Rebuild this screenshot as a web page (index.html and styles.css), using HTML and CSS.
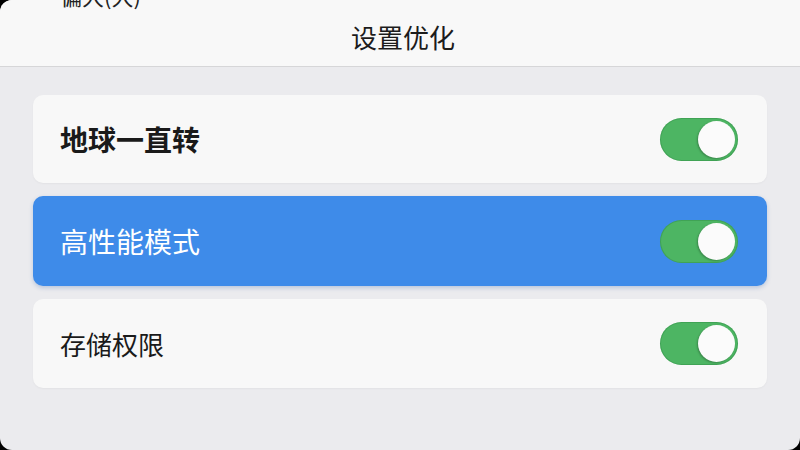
FILE: index.html
```html
<!DOCTYPE html>
<html lang="zh">
<head>
<meta charset="utf-8">
<link rel="stylesheet" href="styles.css">
</head>
<body>
<div class="sheet">
  <span class="behind">偏大(大)</span>
  <header class="head">设置优化</header>
  <main class="list">
    <div class="card">
      <span class="label bold">地球一直转</span>
      <span class="toggle"><span class="knob"></span></span>
    </div>
    <div class="card active">
      <span class="label">高性能模式</span>
      <span class="toggle"><span class="knob"></span></span>
    </div>
    <div class="card last">
      <span class="label small">存储权限</span>
      <span class="toggle"><span class="knob"></span></span>
    </div>
  </main>
</div>
</body>
</html>
```
FILE: styles.css
```css
html, body {
  margin: 0;
  padding: 0;
  width: 800px;
  height: 450px;
  overflow: hidden;
  background: #000;
  font-family: "Noto Sans CJK SC", "Noto Sans", sans-serif;
}
.sheet {
  position: relative;
  width: 800px;
  height: 450px;
  background: #ebebee;
  border-radius: 12px 0 12px 12px;
  overflow: hidden;
  display: flex;
  flex-direction: column;
}
.behind {
  position: absolute;
  top: -21px;
  left: 60px;
  font-size: 22px;
  color: #222;
  z-index: 2;
}
.head {
  height: 67px;
  flex: none;
  background: #f8f8f8;
  border-bottom: 1px solid #d6d6d8;
  display: flex;
  align-items: center;
  justify-content: center;
  font-size: 26px;
  color: #1c1c1c;
  padding-top: 6px;
  padding-left: 6px;
  box-sizing: border-box;
}
.list {
  padding: 28px 33px 0;
  display: flex;
  flex-direction: column;
  gap: 13px;
}
.card {
  height: 88px;
  background: #f8f8f8;
  border-radius: 10px;
  display: flex;
  align-items: center;
  justify-content: space-between;
  padding: 0 29px 0 27px;
  box-shadow: 0 1px 2px rgba(0,0,0,0.04);
}
.card.active {
  height: 90px;
  background: #3e8be9;
  color: #fff;
  box-shadow: 0 2px 4px rgba(40,90,170,0.25);
}
.card.last {
  height: 89px;
}
.label {
  font-size: 28px;
  color: #1a1a1a;
}
.active .label {
  color: #fff;
}
.label.bold {
  font-weight: 700;
}
.label.small {
  font-size: 26px;
}
.toggle {
  width: 78px;
  height: 43px;
  border-radius: 22px;
  background: #4db563;
  display: flex;
  align-items: center;
  justify-content: flex-end;
  padding-right: 3px;
  box-sizing: border-box;
  box-shadow: inset 0 0 0 1px rgba(40,130,60,0.35);
}
.knob {
  width: 37px;
  height: 37px;
  border-radius: 50%;
  background: #fbfbfb;
  box-shadow: -1px 1px 2px rgba(0,0,0,0.25);
}
```
